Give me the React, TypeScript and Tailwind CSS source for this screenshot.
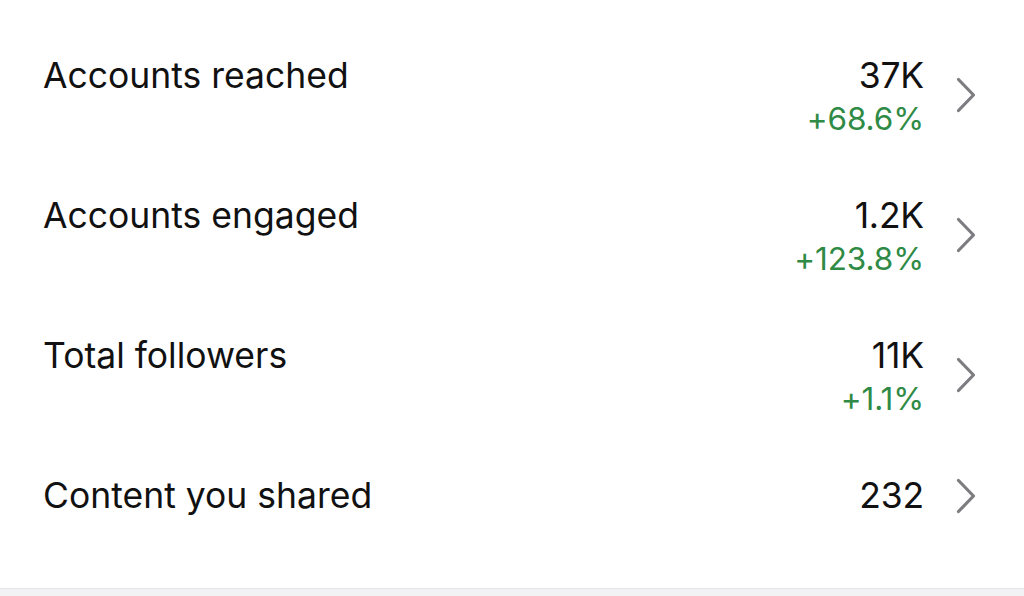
const rows = [
  { title: "Accounts reached", value: "37K", change: "+68.6%" },
  { title: "Accounts engaged", value: "1.2K", change: "+123.8%" },
  { title: "Total followers", value: "11K", change: "+1.1%" },
  { title: "Content you shared", value: "232", change: "" },
];

function Chevron({ lifted }: { lifted: boolean }) {
  return (
    <svg
      width="20"
      height="36"
      viewBox="0 0 20 36"
      className={lifted ? "-translate-y-[4px] shrink-0" : "shrink-0"}
      fill="none"
      stroke="#7c7c81"
      strokeWidth={3.2}
      strokeLinecap="round"
      strokeLinejoin="round"
    >
      <polyline points="2.5,2.5 17.5,18 2.5,33.5" />
    </svg>
  );
}

export default function App() {
  return (
    <div className="w-[1024px] h-[596px] bg-[#f2f2f4] overflow-hidden font-['Inter','Liberation_Sans',sans-serif]">
      <div className="h-[589px] bg-white border-b border-[#e4e4e6] pt-[56px] pl-[43px] pr-[48px]">
        {rows.map((r) => (
          <div key={r.title} className="h-[140px] flex items-start justify-between">
            <span className="text-[35.5px] leading-[40px] text-[#111] tracking-[0px]">{r.title}</span>
            <div className="flex items-center gap-[32px]">
              <div className="flex flex-col items-end">
                <span className="text-[35.5px] leading-[40px] text-[#111] tracking-[-0.2px]">{r.value}</span>
                {r.change && (
                  <span className="text-[31.5px] leading-[46px] text-[#2e8a45] tracking-[-0.1px]">{r.change}</span>
                )}
              </div>
              <Chevron lifted={!!r.change} />
            </div>
          </div>
        ))}
      </div>
    </div>
  );
}
